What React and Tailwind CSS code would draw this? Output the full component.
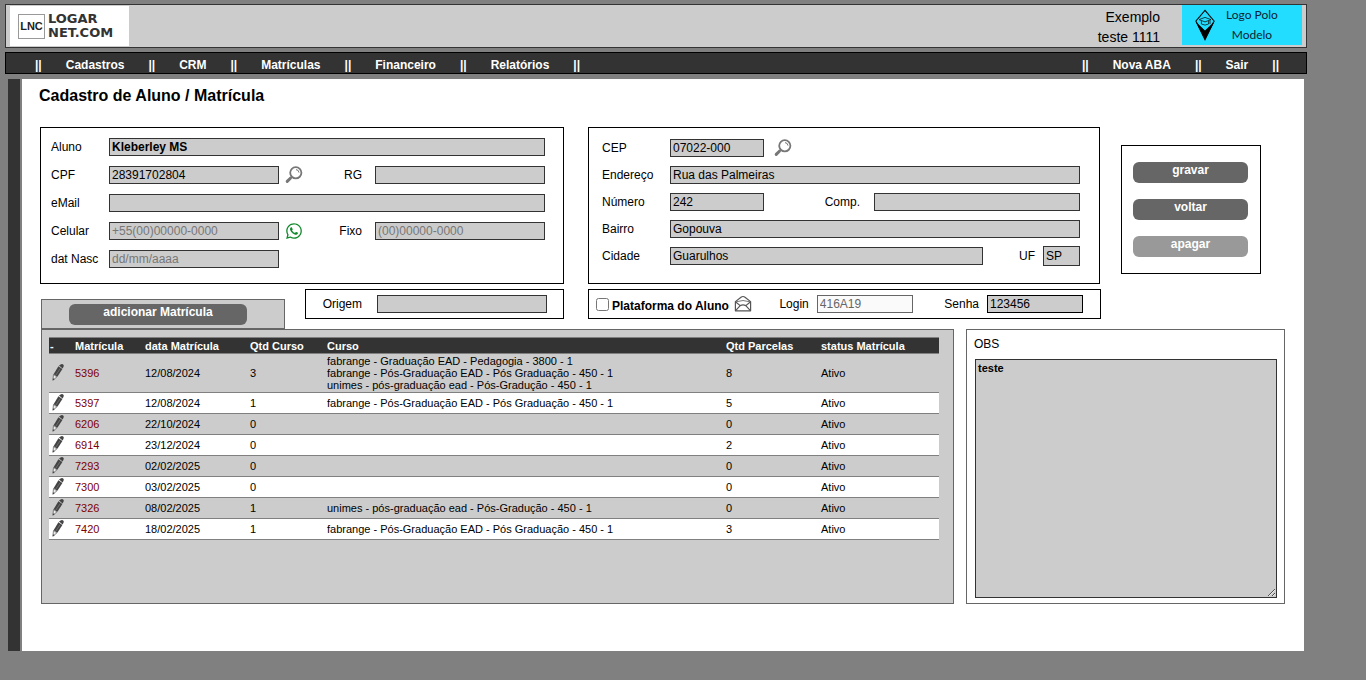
import React, { useState } from "react";
import { FaWhatsapp } from "react-icons/fa";

const menu = ["Cadastros", "CRM", "Matrículas", "Financeiro", "Relatórios"];
const menuRight = ["Nova ABA", "Sair"];

const matriculas = [
  {
    id: 5396,
    data: "12/08/2024",
    qtd: 3,
    cursos: [
      "fabrange - Graduação EAD - Pedagogia - 3800 - 1",
      "fabrange - Pós-Graduação EAD - Pós Graduação - 450 - 1",
      "unimes - pós-graduação ead - Pós-Gradução - 450 - 1",
    ],
    parcelas: 8,
  },
  { id: 5397, data: "12/08/2024", qtd: 1, cursos: ["fabrange - Pós-Graduação EAD - Pós Graduação - 450 - 1"], parcelas: 5 },
  { id: 6206, data: "22/10/2024", qtd: 0, cursos: [], parcelas: 0 },
  { id: 6914, data: "23/12/2024", qtd: 0, cursos: [], parcelas: 2 },
  { id: 7293, data: "02/02/2025", qtd: 0, cursos: [], parcelas: 0 },
  { id: 7300, data: "03/02/2025", qtd: 0, cursos: [], parcelas: 0 },
  { id: 7326, data: "08/02/2025", qtd: 1, cursos: ["unimes - pós-graduação ead - Pós-Gradução - 450 - 1"], parcelas: 0 },
  { id: 7420, data: "18/02/2025", qtd: 1, cursos: ["fabrange - Pós-Graduação EAD - Pós Graduação - 450 - 1"], parcelas: 3 },
];

const Field = ({ className = "h-[18px] border-[#333] bg-[#ccc]", width = "w-full", ...props }) => (
  <input
    type="text"
    className={`${className} ${width} min-w-0 border px-[2px] text-xs placeholder:text-[#777] outline-none`}
    {...props}
  />
);

const Action = ({ children, className = "bg-[#666]" }) => (
  <button type="button" className={`${className} h-[21px] w-full rounded-md pb-[5px] text-xs font-bold text-white`}>
    {children}
  </button>
);

const Lupa = () => (
  <svg viewBox="0 0 18 18" className="size-[18px]" fill="none" stroke="#777">
    <circle cx="10.8" cy="6.8" r="5.6" strokeWidth="1.8" />
    <path d="M11 3.6a3.3 3.3 0 0 1 3 3" strokeWidth="1" />
    <path d="M6.8 10.8 5.4 12.2" strokeWidth="1.6" />
    <path d="M5.4 12.2 2.2 15.4" strokeWidth="3" strokeLinecap="round" />
  </svg>
);

const Envelope = () => (
  <svg viewBox="0 0 18 18" className="size-[18px]" fill="none" stroke="#555" strokeWidth="1.2" strokeLinejoin="round">
    <path d="M1.4 6.6 7 2.2q2-1.4 4 0l5.6 4.4v9.2H1.4z" />
    <path d="M1.4 6.8 6.2 10.6M16.6 6.8l-4.8 3.8M1.6 15.6l4.6-5q2.8-1.4 5.6 0l4.6 5" />
    <path d="M2.2 6.8q6.8-2.6 13.6 0" strokeWidth="0.8" />
  </svg>
);

const Lapis = () => (
  <svg viewBox="0 0 12 17" className="h-[17px] w-3">
    <path d="M7 1.6 8.6.4q1.8-.8 2.8.4.6.8.2 1.800l-1 1.800z" fill="#444" />
    <path d="M6.400 2.300 10.400 5 5.400 12.800 1.600 10.200z" fill="#444" />
    <path d="M8.200 4.600 3.800 11.200" stroke="#888" strokeWidth="0.6" />
    <path d="M1.500 10.500 4.900 12.900 .9 16.200z" fill="#eee" stroke="#555" strokeWidth="0.7" />
    <path d="M.7 16.600 1 14.200 2.700 15.200z" fill="#444" />
  </svg>
);

const LogoLogarnet = () => (
  <div className="flex h-10 w-[119px] items-center bg-white pl-2">
    <div className="flex h-[25px] w-[27px] items-center justify-center border border-[#999] text-[11px] font-bold text-[#222]">
      LNC
    </div>
    <div className="ml-[3px] font-['DejaVu_Sans'] text-[13px] leading-[14px] font-bold text-[#333]">
      <div>LOGAR</div>
      <div>NET.COM</div>
    </div>
  </div>
);

const LogoPolo = () => (
  <div className="flex h-10 w-[120px] items-center bg-[#2df] pl-3">
    <svg viewBox="0 0 22 32" className="h-8 w-[22px]" fill="none" stroke="#111">
      <path d="M11 1.400 20 12.200 11 30.500 2 12.200z" strokeWidth="1.300" />
      <path d="M1.600 12.600 11 21.500l9.400-8.900L11 31z" fill="#000" stroke="none" />
      <path d="M2.600 12.300 11 20l8.400-7.700L11 2.800z" fill="#2df" stroke="none" />
      <path d="m5 10.600 6-2.200 6 2.200-6 2.300zM7.400 12v3q3.600 2.200 7.200 0v-3M16 11.400v3.600" strokeWidth="0.800" />
    </svg>
    <div className="ml-[10px] text-center font-['Lato'] text-xs leading-5 text-[#123]">
      Logo Polo
      <br />
      Modelo
    </div>
  </div>
);

const App = () => {
  const [plataforma, setPlataforma] = useState(false);

  return (
    <div className="min-h-screen bg-[#808080] pt-1 pr-[59px] pb-7 pl-[5px] font-['Liberation_Sans',Arial,sans-serif] text-xs text-black">
      {/* Header */}
      <header className="flex h-11 justify-between border border-[#333] bg-[#ccc] pr-1 pl-1">
        <div className="pt-px">
          <LogoLogarnet />
        </div>
        <div className="flex">
          <div className="mr-[22px] pt-[2px] text-right text-sm leading-5">
            Exemplo
            <br />
            teste 1111
          </div>
          <LogoPolo />
        </div>
      </header>

      {/* Menu */}
      <nav className="mt-1 flex h-[22px] items-center justify-between border border-black bg-[#333] pr-[27px] pl-[29px] font-bold text-white">
        <div className="flex gap-6 pt-1">
          <span>||</span>
          {menu.map((item) => (
            <React.Fragment key={item}>
              <a href="#">{item}</a>
              <span>||</span>
            </React.Fragment>
          ))}
        </div>
        <div className="flex gap-6 pt-1">
          <span>||</span>
          {menuRight.map((item) => (
            <React.Fragment key={item}>
              <a href="#">{item}</a>
              <span>||</span>
            </React.Fragment>
          ))}
        </div>
      </nav>

      <div className="mt-[5px] mr-[3px] ml-[3px] flex gap-[2px]">
        <aside className="w-3 shrink-0 bg-[#333]" />

        <main className="min-w-0 flex-1 bg-white pt-[5px] pr-[19px] pb-[47px] pl-[18px]">
          <h1 className="-ml-px text-base font-bold">Cadastro de Aluno / Matrícula</h1>

          <div className="mt-[19px] flex items-start">
            <div className="grid flex-1 grid-cols-[524fr_512fr] gap-x-6 gap-y-[5px]">
              {/* Dados do aluno */}
              <section className="grid h-[157px] auto-rows-[18px] grid-cols-[58px_1fr_96px_1fr] items-center gap-y-[10px] border border-black pt-[10px] pr-[18px] pl-[10px]">
                <label htmlFor="aluno">Aluno</label>
                <div className="col-span-3 flex">
                  <Field id="aluno" defaultValue="Kleberley MS" className="h-[18px] border-[#333] bg-[#ccc] font-bold" />
                </div>

                <label htmlFor="cpf">CPF</label>
                <Field id="cpf" defaultValue="28391702804" />
                <div className="flex items-center justify-between pr-[13px] pl-[6px]">
                  <button type="button" aria-label="Buscar CPF">
                    <Lupa />
                  </button>
                  <label htmlFor="rg">RG</label>
                </div>
                <Field id="rg" />

                <label htmlFor="email">eMail</label>
                <div className="col-span-3 flex">
                  <Field id="email" />
                </div>

                <label htmlFor="celular">Celular</label>
                <Field id="celular" placeholder="+55(00)00000-0000" />
                <div className="flex items-center justify-between pr-[13px] pl-[6px]">
                  <button type="button" aria-label="WhatsApp">
                    <FaWhatsapp className="size-[18px] text-[#128a2c]" />
                  </button>
                  <label htmlFor="fixo">Fixo</label>
                </div>
                <Field id="fixo" placeholder="(00)00000-0000" />

                <label htmlFor="nasc">dat Nasc</label>
                <Field id="nasc" placeholder="dd/mm/aaaa" />
              </section>

              {/* Endereço */}
              <section className="grid h-[157px] auto-rows-[18px] grid-cols-[68px_1fr] items-center gap-y-[9px] border border-black pt-[11px] pr-[19px] pl-[13px]">
                <label htmlFor="cep">CEP</label>
                <div className="flex items-center">
                  <Field id="cep" width="w-[94px]" defaultValue="07022-000" />
                  <button type="button" aria-label="Buscar CEP" className="ml-[10px]">
                    <Lupa />
                  </button>
                </div>

                <label htmlFor="endereco">Endereço</label>
                <Field id="endereco" defaultValue="Rua das Palmeiras" />

                <label htmlFor="numero">Número</label>
                <div className="flex items-center justify-between">
                  <Field id="numero" width="w-[94px]" defaultValue="242" />
                  <div className="flex items-center gap-[14px]">
                    <label htmlFor="comp">Comp.</label>
                    <Field id="comp" width="w-[206px]" />
                  </div>
                </div>

                <label htmlFor="bairro">Bairro</label>
                <Field id="bairro" defaultValue="Gopouva" />

                <label htmlFor="cidade">Cidade</label>
                <div className="flex items-center">
                  <Field id="cidade" defaultValue="Guarulhos" />
                  <label htmlFor="uf" className="mr-2 ml-9">
                    UF
                  </label>
                  <Field id="uf" width="w-[37px] shrink-0" defaultValue="SP" className="h-5 border-[#333] bg-[#ccc]" />
                </div>
              </section>

              {/* Aba da matrícula + origem */}
              <div className="flex h-10 items-start justify-between pl-px">
                <div className="w-[244px] self-end border border-[#666] bg-[#ccc] pt-1 pr-[37px] pb-[3px] pl-[27px]">
                  <Action>adicionar Matrícula</Action>
                </div>
                <div className="flex h-[30px] items-center border border-black pr-4 pl-[17px]">
                  <label htmlFor="origem" className="mr-[15px]">
                    Origem
                  </label>
                  <Field id="origem" width="w-[170px]" />
                </div>
              </div>

              {/* Plataforma */}
              <div className="-mr-px flex h-[30px] items-center justify-between border border-black pr-[17px] pl-[7px]">
                <div className="flex items-center">
                  <input
                    id="plataforma"
                    type="checkbox"
                    checked={plataforma}
                    onChange={(e) => setPlataforma(e.target.checked)}
                    className="mr-[3px] size-[13px]"
                  />
                  <label htmlFor="plataforma" className="pt-[3px] font-bold">
                    Plataforma do Aluno
                  </label>
                  <button type="button" aria-label="Enviar e-mail" className="ml-[5px]">
                    <Envelope />
                  </button>
                </div>
                <div className="flex items-center gap-2 pr-1">
                  <label htmlFor="login">Login</label>
                  <Field id="login" width="w-24" readOnly defaultValue="416A19" className="h-[18px] border-[#666] bg-[#fafafa] text-[#666]" />
                </div>
                <div className="flex items-center gap-2">
                  <label htmlFor="senha">Senha</label>
                  <Field id="senha" width="w-24" defaultValue="123456" className="h-[18px] border-black bg-[#ccc]" />
                </div>
              </div>
            </div>

            {/* Ações */}
            <div className="mt-[18px] mr-6 ml-[21px] flex h-[129px] w-[140px] flex-col gap-4 border border-black pt-4 pr-3 pl-[11px]">
              <Action>gravar</Action>
              <Action>voltar</Action>
              <Action className="bg-[#999]">apagar</Action>
            </div>
          </div>

          <div className="flex gap-3 pl-px">
            {/* Lista de matrículas */}
            <section className="h-[275px] min-w-0 flex-1 border border-[#666] bg-[#ccc] pt-[7px] pr-[14px] pl-[7px]">
              <table className="w-full table-fixed text-[11px] leading-3">
                <thead>
                  <tr className="h-4 border-y border-[#808080] bg-[#333] text-left text-white">
                    <th className="w-[25px] pl-px">-</th>
                    <th className="w-[70px] pl-px">Matrícula</th>
                    <th className="w-[105px] pl-px">data Matrícula</th>
                    <th className="w-[77px] pl-px">Qtd Curso</th>
                    <th className="pl-px">Curso</th>
                    <th className="w-[95px] pl-px">Qtd Parcelas</th>
                    <th className="w-[119px] pl-px">status Matrícula</th>
                  </tr>
                </thead>
                <tbody>
                  {matriculas.map((m) => (
                    <tr key={m.id} className="h-[21px] border-b border-[#808080] even:bg-white">
                      <td className="pb-[2px] pl-[3px]">
                        <a href="#" aria-label="Editar" className="block">
                          <Lapis />
                        </a>
                      </td>
                      <td className="pl-px text-[#800000]">{m.id}</td>
                      <td className="pl-px">{m.data}</td>
                      <td className="pl-px">{m.qtd}</td>
                      <td className="py-px pl-px">
                        {m.cursos.map((curso) => (
                          <div key={curso}>{curso}</div>
                        ))}
                      </td>
                      <td className="pl-px">{m.parcelas}</td>
                      <td className="pl-px">Ativo</td>
                    </tr>
                  ))}
                </tbody>
              </table>
            </section>

            {/* Observações */}
            <section className="flex h-[275px] w-[319px] flex-col border border-[#666] pt-[6px] pr-[7px] pb-[5px] pl-2">
              <label htmlFor="obs" className="-ml-px">
                OBS
              </label>
              <textarea
                id="obs"
                defaultValue="teste"
                className="mt-[7px] w-full flex-1 border border-[#333] bg-[#ccc] p-[2px] text-[11px] leading-3 font-bold outline-none"
              />
            </section>
          </div>
        </main>
      </div>
    </div>
  );
};

export default App;
